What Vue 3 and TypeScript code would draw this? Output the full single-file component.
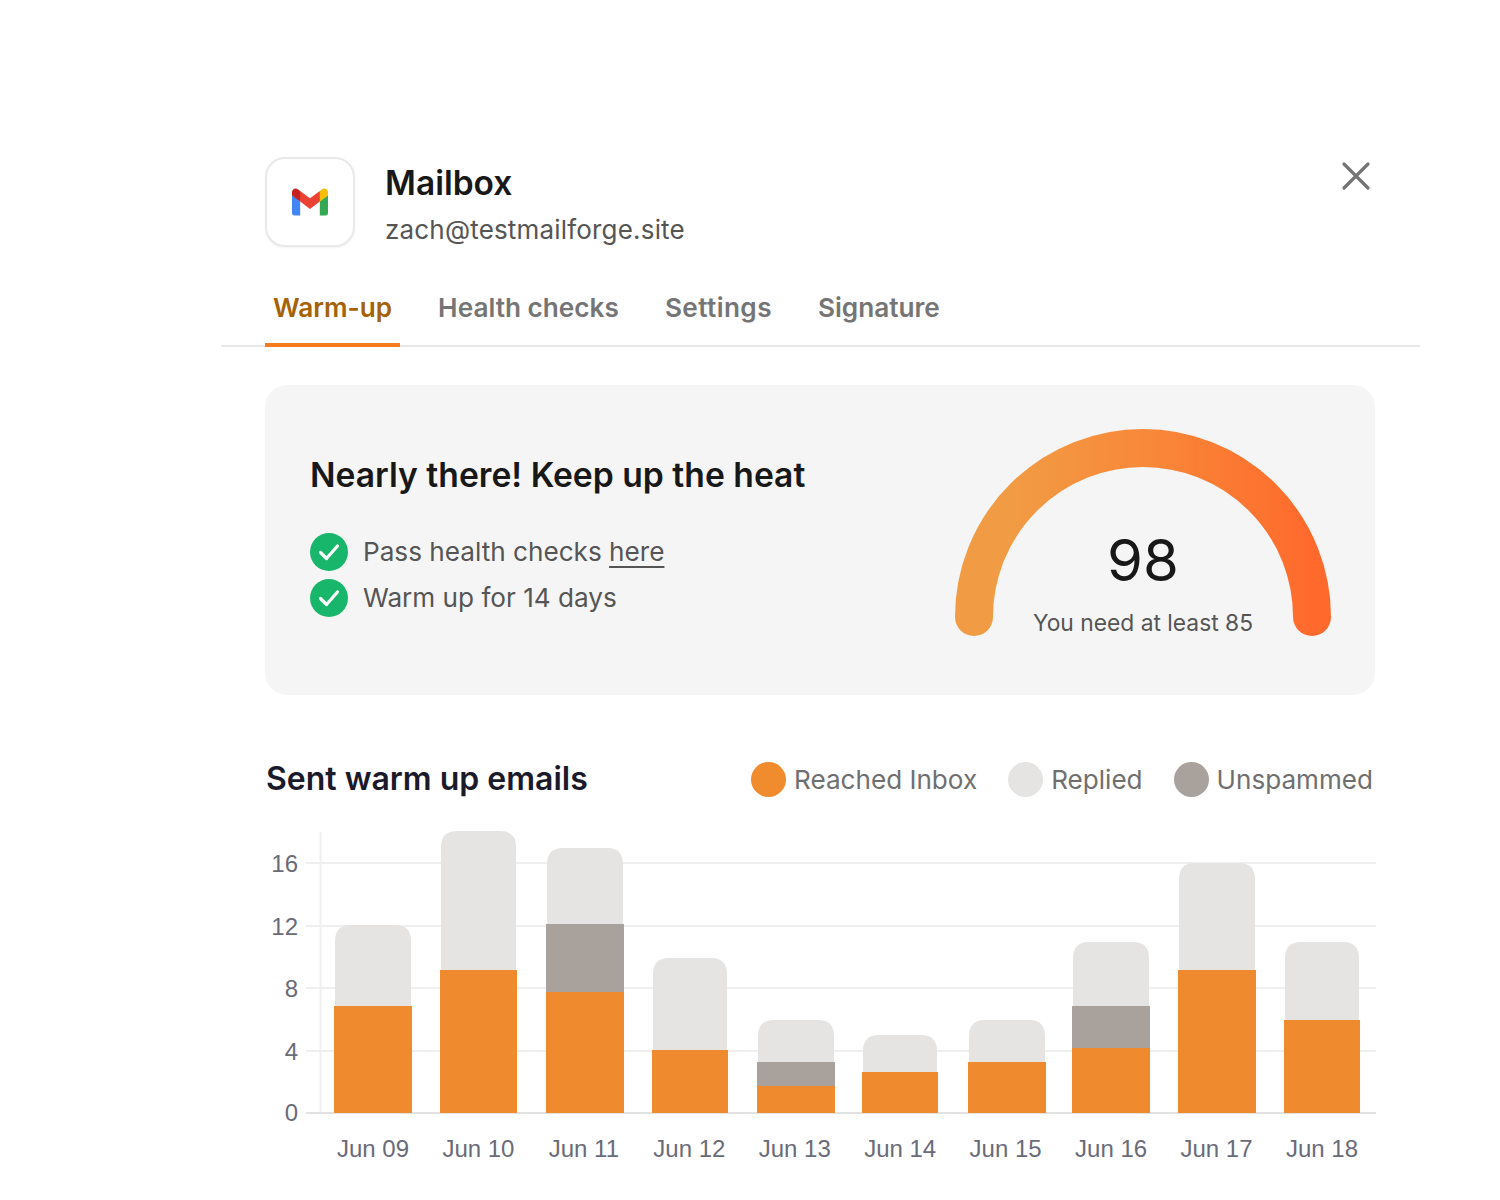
<script setup lang="ts">
interface Day { label: string; x: number; w: number; orange: number; gray: number | null; light: number }
const days: Day[] = [
  { label: 'Jun 09', x: 334, w: 78, orange: 1006, gray: null, light: 925 },
  { label: 'Jun 10', x: 440, w: 77, orange: 970, gray: null, light: 831 },
  { label: 'Jun 11', x: 546, w: 78, orange: 992, gray: 924, light: 848 },
  { label: 'Jun 12', x: 652, w: 76, orange: 1050, gray: null, light: 958 },
  { label: 'Jun 13', x: 757, w: 78, orange: 1086, gray: 1062, light: 1020 },
  { label: 'Jun 14', x: 862, w: 76, orange: 1072, gray: null, light: 1035 },
  { label: 'Jun 15', x: 968, w: 78, orange: 1062, gray: null, light: 1020 },
  { label: 'Jun 16', x: 1072, w: 78, orange: 1048, gray: 1006, light: 942 },
  { label: 'Jun 17', x: 1178, w: 78, orange: 970, gray: null, light: 863 },
  { label: 'Jun 18', x: 1284, w: 76, orange: 1020, gray: null, light: 942 },
]
const base = 1113
const ticks = [
  { label: '16', y: 863 },
  { label: '12', y: 926 },
  { label: '8', y: 988 },
  { label: '4', y: 1051 },
]
const tabs = ['Warm-up', 'Health checks', 'Settings', 'Signature']
const legend = [
  { label: 'Reached Inbox', color: '#f08c2e' },
  { label: 'Replied', color: '#e5e4e3' },
  { label: 'Unspammed', color: '#a9a19c' },
]
function topBar(d: Day): string {
  const r = 16
  const l = d.x + 1
  const w = d.w - 2
  return `M${l} ${d.orange}V${d.light + r}Q${l} ${d.light} ${l + r} ${d.light}H${l + w - r}Q${l + w} ${d.light} ${l + w} ${d.light + r}V${d.orange}Z`
}
function labelX(i: number): number {
  return 373 + i * 105.44
}
</script>

<template>
  <div class="modal">
    <header class="head">
      <div class="logo">
        <svg width="36" height="28" viewBox="0 0 256 193">
          <path fill="#4285F4" d="M58.182 192.05V93.14L27.507 65.077 0 49.504v125.091c0 9.658 7.825 17.455 17.455 17.455h40.727Z" />
          <path fill="#34A853" d="M197.818 192.05h40.727c9.658 0 17.455-7.826 17.455-17.455V49.505l-31.156 17.837-27.026 25.798v98.91Z" />
          <path fill="#EA4335" d="m58.182 93.14-4.174-38.647 4.174-36.989L128 69.868l69.818-52.364 4.669 34.992-4.669 40.644L128 145.504z" />
          <path fill="#FBBC04" d="M197.818 17.504V93.14L256 49.504V26.231c0-21.585-24.64-33.89-41.89-20.945l-16.292 12.218Z" />
          <path fill="#C5221F" d="m0 49.504 26.759 20.07L58.182 93.14V17.504L41.89 5.286C24.61-7.66 0 4.646 0 26.23v23.273Z" />
        </svg>
      </div>
      <div class="who">
        <div class="name">Mailbox</div>
        <div class="mail">zach@testmailforge.site</div>
      </div>
      <svg class="close" width="30" height="30" viewBox="0 0 30 30">
        <path d="M3 3 27 27M27 3 3 27" stroke="#757575" stroke-width="3.2" stroke-linecap="round" fill="none" />
      </svg>
    </header>

    <nav class="tabs">
      <div v-for="(t, i) in tabs" :key="t" class="tab" :class="{ active: i === 0 }">{{ t }}</div>
    </nav>

    <section class="card">
      <div class="status">
        <h2>Nearly there! Keep up the heat</h2>
        <ul>
          <li>
            <svg width="38" height="38" viewBox="0 0 38 38">
              <circle cx="19" cy="19" r="19" fill="#18b66a" />
              <path d="M10.5 19.5 16.5 25.5 27.5 13" stroke="#fff" stroke-width="3.2" stroke-linecap="round" stroke-linejoin="round" fill="none" />
            </svg>
            <span>Pass health checks <a>here</a></span>
          </li>
          <li>
            <svg width="38" height="38" viewBox="0 0 38 38">
              <circle cx="19" cy="19" r="19" fill="#18b66a" />
              <path d="M10.5 19.5 16.5 25.5 27.5 13" stroke="#fff" stroke-width="3.2" stroke-linecap="round" stroke-linejoin="round" fill="none" />
            </svg>
            <span>Warm up for 14 days</span>
          </li>
        </ul>
      </div>
      <div class="gauge">
        <svg width="376" height="207" viewBox="0 0 376 207">
          <defs>
            <linearGradient id="heat" x1="0" y1="0" x2="1" y2="0">
              <stop offset="0.1" stop-color="#f19c44" />
              <stop offset="0.55" stop-color="#f98638" />
              <stop offset="1" stop-color="#ff6a2c" />
            </linearGradient>
          </defs>
          <path d="M19 188A169 169 0 0 1 357 188" fill="none" stroke="url(#heat)" stroke-width="38" stroke-linecap="round" />
        </svg>
        <div class="score">98</div>
        <div class="need">You need at least 85</div>
      </div>
    </section>

    <div class="sent">
      <h3>Sent warm up emails</h3>
      <div class="legend">
        <div v-for="l in legend" :key="l.label" class="key">
          <i :style="{ background: l.color }"></i>{{ l.label }}
        </div>
      </div>
    </div>

    <svg class="chart" width="1199" height="360" viewBox="221 820 1199 360">
      <g stroke="#efefef" stroke-width="2">
        <line v-for="t in ticks" :key="t.y" x1="306" x2="1376" :y1="t.y" :y2="t.y" />
        <line x1="320.5" x2="320.5" y1="832" y2="1113" />
      </g>
      <line x1="306" x2="1376" :y1="base" :y2="base" stroke="#e2e2e2" stroke-width="2" />
      <g font-family="'Liberation Sans', sans-serif" font-size="24" fill="#696b78">
        <text v-for="t in ticks" :key="t.label" x="298" :y="t.y + 8.5" text-anchor="end">{{ t.label }}</text>
        <text x="298" :y="base + 8" text-anchor="end">0</text>
      </g>
      <g v-for="(d, i) in days" :key="d.label">
        <path :d="topBar(d)" fill="#e5e4e3" />
        <rect v-if="d.gray !== null" :x="d.x" :y="d.gray" :width="d.w" :height="d.orange - d.gray" fill="#a9a19c" />
        <rect :x="d.x" :y="d.orange" :width="d.w" :height="base - d.orange" fill="#ef8b2e" />
        <text :x="labelX(i)" y="1157" text-anchor="middle" font-family="'Liberation Sans', sans-serif" font-size="24" fill="#696b78">{{ d.label }}</text>
      </g>
    </svg>
  </div>
</template>

<style>
html, body { background: #fff; }
</style>

<style scoped>
.modal {
  width: 1199px;
  height: 1200px;
  margin-left: 221px;
  padding-top: 157px;
  box-sizing: border-box;
  font-family: Inter, "Liberation Sans", sans-serif;
  overflow: hidden;
}
.head {
  display: flex;
  align-items: flex-start;
  padding: 0 49px 0 44px;
}
.logo {
  width: 90px;
  height: 90px;
  box-sizing: border-box;
  border: 2px solid #e9e9e9;
  border-radius: 20px;
  display: flex;
  align-items: center;
  justify-content: center;
  box-shadow: 0 1px 2px rgba(0, 0, 0, 0.05);
}
.who { margin-left: 30px; flex: 1; padding-top: 5px; }
.name {
  font-size: 33.5px;
  line-height: 42px;
  font-weight: 600;
  color: #181818;
}
.mail {
  font-size: 26px;
  letter-spacing: 0.18px;
  line-height: 34px;
  margin-top: 9px;
  color: #555;
}
.close { margin-top: 4px; }
.tabs {
  display: flex;
  gap: 30px;
  margin-top: 44px;
  padding-left: 44px;
  height: 54px;
  border-bottom: 2px solid #e8e8e8;
}
.tab {
  padding: 0 8px;
  height: 54px;
  font-size: 26.2px;
  line-height: 33px;
  font-weight: 600;
  color: #757575;
}
.tab:nth-child(3) { letter-spacing: 0.4px; }
.tab.active {
  color: #a56207;
  height: 52px;
  border-bottom: 4px solid #f47b20;
}
.card {
  margin: 38px 45px 0 44px;
  height: 310px;
  background: #f5f5f5;
  border-radius: 22px;
  display: flex;
  justify-content: space-between;
  padding: 44px 44px 0 45px;
  box-sizing: border-box;
}
.status h2 {
  margin: 24px 0 0;
  font-size: 33.66px;
  line-height: 44px;
  font-weight: 600;
  color: #181818;
}
.status ul {
  list-style: none;
  margin: 36px 0 0;
  padding: 0;
  display: flex;
  flex-direction: column;
  gap: 8px;
}
.status li {
  display: flex;
  align-items: center;
  gap: 15px;
  font-size: 26.15px;
  color: #555;
  height: 38px;
}
.status li span { margin-top: -2px; }
.status a {
  text-decoration: underline;
  text-decoration-thickness: 2px;
  text-underline-offset: 5px;
}
.gauge { position: relative; width: 376px; height: 207px; }
.gauge svg { display: block; }
.score {
  position: absolute;
  left: 0; right: 0; top: 96px;
  text-align: center;
  font-size: 58px;
  line-height: 70px;
  color: #181818;
}
.need {
  position: absolute;
  left: 0; right: 0; top: 178px;
  text-align: center;
  font-size: 22.8px;
  line-height: 32px;
  color: #555;
}
.sent {
  display: flex;
  justify-content: space-between;
  align-items: center;
  margin: 61px 47px 0 45px;
  height: 46px;
}
.sent h3 {
  margin: -2px 0 0;
  font-size: 32px;
  font-weight: 600;
  color: #1a1a2a;
}
.legend { display: flex; gap: 31px; margin-top: 1px; }
.key {
  display: flex;
  align-items: center;
  gap: 8px;
  font-size: 26.1px;
  color: #6f6f6f;
}
.key i { width: 35px; height: 35px; border-radius: 50%; display: block; }
.chart { display: block; margin-top: 18px; }
</style>
